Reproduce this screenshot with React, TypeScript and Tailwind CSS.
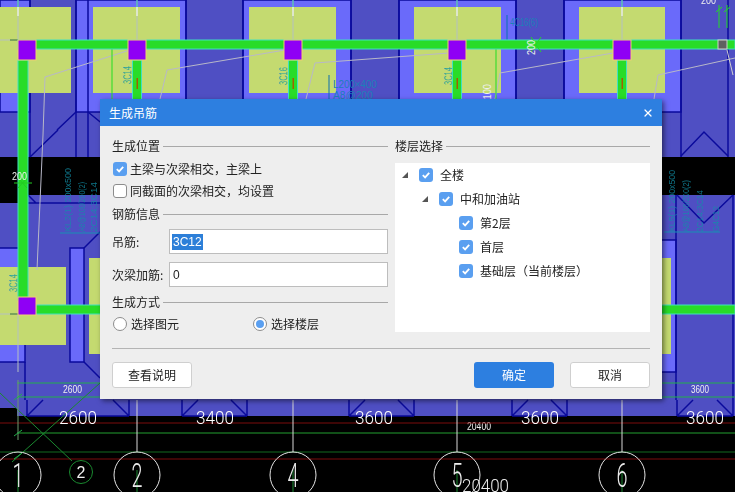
import React from 'react';
import { X } from 'lucide-react';

const columns = [137, 293, 457, 622];
const olives = [
  [0, 7, 71, 86], [93, 7, 87, 86], [249, 7, 87, 86], [414, 7, 87, 86], [579, 7, 86, 86],
  [0, 267, 66, 78], [89, 258, 20, 96], [640, 258, 31, 96],
];
const lightBands = [
  [0, 0, 30, 112], [76, 0, 110, 112], [243, 0, 108, 112], [399, 0, 117, 112], [564, 0, 117, 112],
  [-2, 248, 27, 114], [70, 248, 14, 114], [630, 240, 46, 132],
];
const navyLines = [30, 76, 88, 186, 243, 351, 399, 516, 564, 681, 728];
const bays: [number, number][] = [[27, 129], [182, 247], [349, 414], [512, 567], [677, 733]];
const bigDims: [string, number][] = [['2600', 78], ['3400', 215], ['3600', 374], ['3600', 540], ['3600', 705]];
const axes: [string, number][] = [['1', 18], ['2', 137], ['4', 293], ['5', 457], ['6', 622]];

const CadDrawing = () => (
  <svg className="absolute inset-0" width="735" height="492" viewBox="0 0 735 492" fontFamily="'Liberation Sans', sans-serif">
    <rect width="735" height="492" fill="#000" />
    <rect width="735" height="157" fill="#4f4fc3" />
    <rect x="28" y="195" width="707" height="221" fill="#4f4fc3" />
    <rect y="203" width="735" height="205" fill="#4f4fc3" />
    <rect x="17" y="408" width="718" height="8" fill="#4f4fc3" />
    {lightBands.map(([x, y, w, h], i) => (
      <rect key={i} x={x} y={y} width={w} height={h} fill="#6a6afa" stroke="#0a0a9c" strokeWidth="1.5" />
    ))}
    {navyLines.map((x) => (
      <line key={x} x1={x} y1="0" x2={x} y2="157" stroke="#0a0a9c" strokeWidth="1.5" />
    ))}
    <path d="M30 157L58 130M76 112L57 130M88 112L110 130M28 203H100M28 195L36 203" stroke="#0a0a9c" strokeWidth="1.5" fill="none" />
    <path d="M25 362V400M84 362L100 378M676 195V400M733 195V400M84 248L100 232" stroke="#0a0a9c" strokeWidth="1.5" fill="none" />
    <path d="M681 156L704 132L728 156M677 195L704 223L733 195" stroke="#0a0a9c" strokeWidth="1.5" fill="none" />
    {bays.map(([a, b], i) => (
      <path key={i} d={`M${a} 416L${a + 16} 400M${b} 416L${b - 16} 400M${a} 416V400M${b} 416V400M${a} 416H${b}`} stroke="#0a0a9c" strokeWidth="1.5" fill="none" />
    ))}
    {olives.map(([x, y, w, h], i) => (
      <rect key={i} x={x} y={y} width={w} height={h} fill="#c4da70" />
    ))}

    <path d="M18 0V40M137 0V40M293 0V40M457 0V40M622 0V40M18 315V372M0 40H18M0 314H18" stroke="#b4c0c0" strokeWidth="1" />
    <path d="M18 0V7M137 0V7M293 0V7M457 0V7M622 0V7" stroke="#30c0b0" strokeWidth="1" />
    <path d="M18 7V16M137 7V16M293 7V16M457 7V16M622 7V16" stroke="#ffffff" strokeWidth="1" />
    <path d="M10 40H18M10 314H18" stroke="#3a7a20" strokeWidth="1" />
    <path d="M130 50L45 77L43 135L37 270M285 50L167 70L160 99M449 53L315 63L306 99M613 53L500 73L495 99M735 58L658 75L654 99" stroke="#b8b8c8" strokeWidth="1" fill="none" />
    <path d="M112 40V99M496 40V99" stroke="#22dd22" strokeWidth="1" />
    <path d="M507 15V44M329 75V99" stroke="#0d6fb0" strokeWidth="1" />

    <rect x="18" y="40" width="717" height="9" fill="#28dc28" stroke="#40e0c0" strokeWidth="1" />
    <rect x="18" y="60" width="10" height="240" fill="#28dc28" stroke="#40e0c0" strokeWidth="1" />
    <rect x="36" y="305" width="699" height="9" fill="#28dc28" stroke="#40e0c0" strokeWidth="1" />
    {columns.map((x) => (
      <g key={x}>
        <rect x={x - 4.5} y="60" width="9" height="40" fill="#28dc28" stroke="#40e0c0" strokeWidth="1" />
        <rect x={x - 0.5} y="78" width="1.5" height="11" fill="#a06000" />
        <rect x={x - 9} y="40" width="18" height="20" fill="#8f00f5" stroke="#f0d070" strokeWidth="1" />
      </g>
    ))}
    <rect x="18" y="40" width="18" height="20" fill="#8f00f5" stroke="#f0d070" strokeWidth="1" />
    <rect x="18" y="297" width="18" height="18" fill="#8f00f5" stroke="#f0d070" strokeWidth="1" />
    <rect x="718" y="40" width="9" height="9" fill="#606060" stroke="#d0d0d0" strokeWidth="1" />
    <path d="M727 50L733 75" stroke="#d0d0d0" strokeWidth="1" />
    <path d="M719 5V28M727 5V28M716 12L722 7M724 12L730 7M531 37L541 52M541 37L531 52" stroke="#22dd22" strokeWidth="1" />
    <path d="M14 183H32M18 178L27 188M27 178L18 188" stroke="#22cc22" strokeWidth="1" />

    <g fill="#2fa59a" fontSize="10">
      <text transform="translate(131 84) rotate(-90)" textLength="18" lengthAdjust="spacingAndGlyphs">3C14</text>
      <text transform="translate(287 85) rotate(-90)" textLength="18" lengthAdjust="spacingAndGlyphs">3C16</text>
      <text transform="translate(452 85) rotate(-90)" textLength="18" lengthAdjust="spacingAndGlyphs">3C14</text>
      <text transform="translate(17 292) rotate(-90)" textLength="18" lengthAdjust="spacingAndGlyphs">3C14</text>
    </g>
    <g fill="#1c7fb8" fontSize="10">
      <text x="333" y="88" textLength="44" lengthAdjust="spacingAndGlyphs">L200×400</text>
      <text x="333" y="99" textLength="40" lengthAdjust="spacingAndGlyphs">A8@200</text>
      <text x="510" y="26" textLength="28" lengthAdjust="spacingAndGlyphs">4C16(6)</text>
    </g>
    <g fill="#1290a8" fontSize="9" opacity="0.8">
      <text transform="translate(71 232) rotate(-90)" textLength="64" lengthAdjust="spacingAndGlyphs">KL2(1) 200x500</text>
      <text transform="translate(85 232) rotate(-90)" textLength="50" lengthAdjust="spacingAndGlyphs">A8@100/200(2)</text>
      <text transform="translate(97 232) rotate(-90)" textLength="50" lengthAdjust="spacingAndGlyphs">2C14;3C14</text>
      <text transform="translate(675 232) rotate(-90)" textLength="62" lengthAdjust="spacingAndGlyphs">KL5(1) 200x500</text>
      <text transform="translate(689 232) rotate(-90)" textLength="52" lengthAdjust="spacingAndGlyphs">A8@100/200(2)</text>
      <text transform="translate(703 232) rotate(-90)" textLength="42" lengthAdjust="spacingAndGlyphs">2C14;3C14</text>
      <text transform="translate(719 232) rotate(-90)" textLength="26" lengthAdjust="spacingAndGlyphs">G4C12</text>
    </g>
    <path d="M60 233H100M664 232H720" stroke="#1890b4" strokeWidth="1" />
    <g fill="#f0f0f0" fontSize="11">
      <text x="12" y="180" textLength="15" lengthAdjust="spacingAndGlyphs">200</text>
      <text transform="translate(535 55) rotate(-90)" textLength="15" lengthAdjust="spacingAndGlyphs">200</text>
      <text transform="translate(491 104) rotate(-90)" textLength="20" lengthAdjust="spacingAndGlyphs">1100</text>
      <text x="701" y="4" textLength="15" lengthAdjust="spacingAndGlyphs">200</text>
      <text x="63" y="393" textLength="19" lengthAdjust="spacingAndGlyphs">2600</text>
      <text x="691" y="393" textLength="18" lengthAdjust="spacingAndGlyphs">3600</text>
      <text x="467" y="430" textLength="24" lengthAdjust="spacingAndGlyphs">20400</text>
    </g>

    <path d="M17 383H100M17 397H100M662 383H735M662 397H735" stroke="#22b04a" strokeWidth="1" />
    <path d="M0 423H735M0 459H735" stroke="#7c0c0c" strokeWidth="1" />
    <path d="M17 433H735" stroke="#22a030" strokeWidth="1" />
    <path d="M0 452H735" stroke="#126a20" strokeWidth="1" />
    <path d="M0 393L72 461M12 462L100 383" stroke="#1a8a30" strokeWidth="1" />
    <path d="M18 380V440" stroke="#6f9a6f" strokeWidth="1" />
    <path d="M14 400L22 394M14 436L22 430M14 459L22 453" stroke="#22b04a" strokeWidth="1" />
    <path d="M137 400V452M293 400V452M457 400V452M622 400V452" stroke="#d8d8d8" strokeWidth="1" />
    <path d="M293 470V492M457 470V492M622 470V492M137 470V492M18 470V492" stroke="#1a8a30" strokeWidth="1" />
    <g fill="#ffffff" fontSize="18" fontFamily="Roboto, sans-serif" fontWeight="300">
      {bigDims.map(([label, x], i) => (
        <text key={i} x={x - 19} y="424" textLength="38" lengthAdjust="spacingAndGlyphs">{label}</text>
      ))}
    </g>
    {axes.map(([label, x]) => (
      <g key={x}>
        <circle cx={x} cy="475" r="23" fill="none" stroke="#e4e4e4" strokeWidth="1" />
        <text x={x} y="487" textAnchor="middle" fontSize="33" fontFamily="Roboto, sans-serif" fontWeight="300" fill="#ececec" textLength="11" lengthAdjust="spacingAndGlyphs">{label}</text>
      </g>
    ))}
    <circle cx="81" cy="472" r="11.5" fill="none" stroke="#1a8a30" strokeWidth="1" />
    <text x="81" y="478" textAnchor="middle" fontSize="16" fill="#f0f0f0">2</text>
    <text x="462" y="492" fontSize="19" fontFamily="Roboto, sans-serif" fontWeight="300" fill="#ececec" textLength="47" lengthAdjust="spacingAndGlyphs">20400</text>
  </svg>
);

const SectionTitle = ({ label }: { label: string }) => (
  <div className="flex h-[18px] items-center gap-[3px]">
    <span className="shrink-0">{label}</span>
    <div className="h-px flex-1 bg-[#a8a8a8]" />
  </div>
);

const CheckBox = ({ checked = true }: { checked?: boolean }) =>
  checked ? (
    <span className="flex h-[14px] w-[14px] shrink-0 items-center justify-center rounded-[3px] bg-[#5a9ff0]">
      <svg width="10" height="10" viewBox="0 0 10 10" fill="none" stroke="#fff" strokeWidth="1.8">
        <path d="M1.8 5.2L4.1 7.4L8.2 2.8" />
      </svg>
    </span>
  ) : (
    <span className="block h-[14px] w-[14px] shrink-0 rounded-[3px] border border-[#8c8c8c] bg-white" />
  );

const Radio = ({ checked = false }: { checked?: boolean }) => (
  <span className="flex h-[14px] w-[14px] shrink-0 items-center justify-center rounded-full border border-[#8c8c8c] bg-white">
    {checked && <span className="h-[8px] w-[8px] rounded-full bg-[#5a9ff0]" />}
  </span>
);

const Arrow = () => (
  <svg width="6" height="6" viewBox="0 0 6 6" className="shrink-0">
    <path d="M6 0V6H0Z" fill="#555" />
  </svg>
);

const TreeRow = ({ indent, arrow, label }: { indent: string; arrow?: boolean; label: string }) => (
  <div className={`flex h-[24px] items-center ${indent}`}>
    <span className="flex w-[17px] shrink-0">{arrow && <Arrow />}</span>
    <CheckBox />
    <span className="ml-[7px] whitespace-nowrap">{label}</span>
  </div>
);

const Field = ({ label, children }: { label: string; children: React.ReactNode }) => (
  <div className="flex items-center">
    <span className="w-[57px] shrink-0 whitespace-nowrap">{label}</span>
    <div className="flex h-[25px] flex-1 items-center border border-[#bdbdbd] bg-white pl-[2px]">{children}</div>
  </div>
);

const App: React.FC = () => {
  return (
    <div className="relative h-[492px] w-[735px] overflow-hidden bg-black">
      <CadDrawing />
      <div
        className="absolute left-[100px] top-[99px] flex h-[300px] w-[562px] flex-col bg-[#eeeeee] text-[12px] text-[#222] shadow-[2px_2px_5px_rgba(0,0,0,0.5)]"
        style={{ fontFamily: "'Noto Sans CJK SC', 'Liberation Sans', sans-serif" }}
      >
        <div className="flex h-[27px] shrink-0 items-center justify-between bg-[#2d7fe0] pl-[9px] pr-[8px] text-white">
          <span>生成吊筋</span>
          <X size={12} strokeWidth={2.5} />
        </div>
        <div className="flex flex-1 flex-col px-[12px] pt-[11px]">
          <div className="flex h-[197px] gap-[7px]">
            <div className="flex w-[276px] flex-col">
              <SectionTitle label="生成位置" />
              <label className="mt-[4px] flex h-[20px] items-center gap-[3px]">
                <span className="pl-px"><CheckBox /></span>
                <span>主梁与次梁相交，主梁上</span>
              </label>
              <label className="mt-[2px] flex h-[20px] items-center gap-[3px]">
                <span className="pl-px"><CheckBox checked={false} /></span>
                <span>同截面的次梁相交，均设置</span>
              </label>
              <div className="mt-[4px]"><SectionTitle label="钢筋信息" /></div>
              <div className="mt-[6px]">
                <Field label="吊筋:">
                  <span className="bg-[#2d7fd8] px-px leading-[16px] text-white" style={{ fontFamily: "'Liberation Sans', sans-serif" }}>3C12</span>
                </Field>
              </div>
              <div className="mt-[8px]">
                <Field label="次梁加筋:">
                  <span className="px-px" style={{ fontFamily: "'Liberation Sans', sans-serif" }}>0</span>
                </Field>
              </div>
              <div className="mt-[6px]"><SectionTitle label="生成方式" /></div>
              <div className="mt-[3px] flex h-[20px] items-center">
                <label className="flex w-[141px] items-center gap-[4px] pl-px">
                  <Radio />
                  <span>选择图元</span>
                </label>
                <label className="flex items-center gap-[4px]">
                  <Radio checked />
                  <span>选择楼层</span>
                </label>
              </div>
            </div>
            <div className="flex w-[255px] flex-col">
              <SectionTitle label="楼层选择" />
              <div className="mt-[8px] h-[169px] bg-white pl-[7px]">
                <TreeRow indent="" arrow label="全楼" />
                <TreeRow indent="pl-[20px]" arrow label="中和加油站" />
                <TreeRow indent="pl-[40px]" label="第2层" />
                <TreeRow indent="pl-[40px]" label="首层" />
                <TreeRow indent="pl-[40px]" label="基础层（当前楼层）" />
              </div>
            </div>
          </div>
          <div className="mt-[14px] h-px bg-[#b4b4b4]" />
          <div className="mt-[13px] flex items-center">
            <button className="h-[26px] w-[80px] rounded-[3px] border border-[#cfcfcf] bg-white">查看说明</button>
            <button className="ml-auto h-[26px] w-[80px] rounded-[3px] bg-[#2d7fe0] text-white">确定</button>
            <button className="ml-[16px] h-[26px] w-[80px] rounded-[3px] border border-[#cfcfcf] bg-white">取消</button>
          </div>
        </div>
      </div>
    </div>
  );
};

export default App;
